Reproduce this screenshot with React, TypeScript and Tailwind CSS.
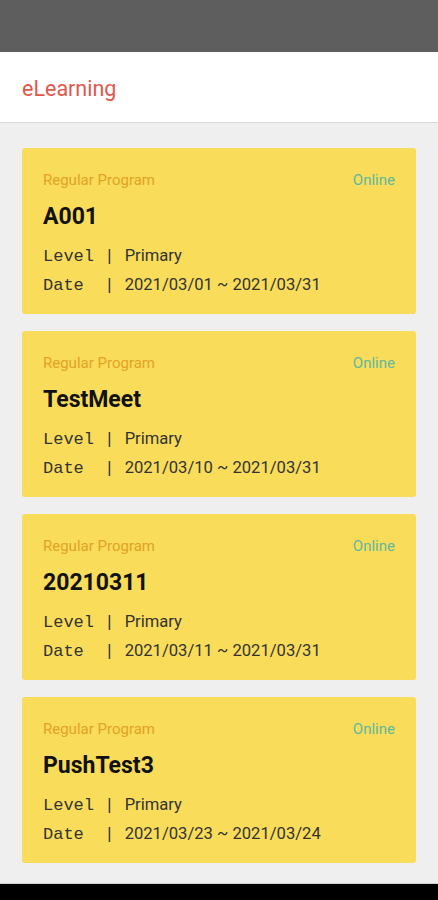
const programs = [
  { name: "A001", level: "Primary", date: "2021/03/01 ~ 2021/03/31" },
  { name: "TestMeet", level: "Primary", date: "2021/03/10 ~ 2021/03/31" },
  { name: "20210311", level: "Primary", date: "2021/03/11 ~ 2021/03/31" },
  { name: "PushTest3", level: "Primary", date: "2021/03/23 ~ 2021/03/24" },
];

const ProgramCard: React.FC<{ name: string; level: string; date: string }> = ({
  name,
  level,
  date,
}) => (
  <div className="h-[166px] rounded-[3px] bg-[#f9dc5a] px-[21px] pt-[22px]">
    <div className="flex h-5 items-center justify-between text-[15px] leading-5">
      <span className="text-[#e3a227]">Regular Program</span>
      <span className="text-[#62b89c]">Online</span>
    </div>
    <div className="mt-[13px] text-[23px] font-bold leading-7 text-[#111]">
      {name}
    </div>
    <div className="mt-[11px] text-[#333]">
      <div className="flex h-[29px] items-center">
        <span className="whitespace-pre font-['Liberation_Mono',monospace] text-[17px]">
          {"Level | "}
        </span>
        <span className="text-[16.6px]">{level}</span>
      </div>
      <div className="flex h-[29px] items-center">
        <span className="whitespace-pre font-['Liberation_Mono',monospace] text-[17px]">
          {"Date  | "}
        </span>
        <span className="text-[16.6px]">{date}</span>
      </div>
    </div>
  </div>
);

export default function App() {
  return (
    <div className="flex h-[900px] flex-col bg-[#efefef] font-['Roboto',sans-serif]">
      <div className="h-[52px] bg-[#5e5e5e]" />
      <div className="flex h-[71px] items-center border-b border-[#dcdcdc] bg-white px-[22px] pt-1">
        <span className="text-[21.5px] text-[#e2574c]">eLearning</span>
      </div>
      <div className="flex flex-1 flex-col gap-[17px] px-[22px] pt-[25px]">
        {programs.map((p) => (
          <ProgramCard key={p.name} {...p} />
        ))}
      </div>
      <div className="h-[17px] border-t border-[#cfcfcf] bg-black" />
    </div>
  );
}
